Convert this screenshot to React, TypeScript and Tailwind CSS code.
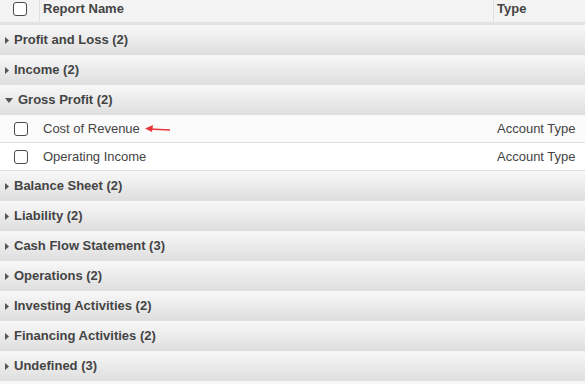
import React from "react";

const groups: { name: string; open?: boolean; children?: { name: string; type: string; arrow?: boolean }[] }[] = [
  { name: "Profit and Loss (2)" },
  { name: "Income (2)" },
  {
    name: "Gross Profit (2)",
    open: true,
    children: [
      { name: "Cost of Revenue", type: "Account Type", arrow: true },
      { name: "Operating Income", type: "Account Type" },
    ],
  },
  { name: "Balance Sheet (2)" },
  { name: "Liability (2)" },
  { name: "Cash Flow Statement (3)" },
  { name: "Operations (2)" },
  { name: "Investing Activities (2)" },
  { name: "Financing Activities (2)" },
  { name: "Undefined (3)" },
  { name: "" },
];

function Box() {
  return <div className="w-[14px] h-[14px] rounded-[3px] border border-[#4a4a4a] bg-white" />;
}

function Caret({ open }: { open?: boolean }) {
  return open ? (
    <svg width="8" height="5" viewBox="0 0 8 5" className="ml-[5px] mr-[5px]">
      <polygon points="0,0 8,0 4,5" fill="#555" />
    </svg>
  ) : (
    <svg width="4" height="7" viewBox="0 0 4 7" className="ml-[5px] mr-[5px]">
      <polygon points="0,0 4,3.5 0,7" fill="#555" />
    </svg>
  );
}

export default function App() {
  return (
    <div className="w-[585px] h-[384px] overflow-hidden bg-white text-[13px]" style={{ fontFamily: '"Liberation Sans", Arial, sans-serif' }}>
      <div className="flex h-[22px] bg-[#f3f3f3] border-b-[3px] border-[#e1e3e6] text-[#444] font-bold box-content">
        <div className="w-[40px] flex items-center justify-center border-r border-[#e0e0e0] pb-[5px] pl-[1px]">
          <Box />
        </div>
        <div className="flex-1 flex items-center pl-[3px] border-r border-[#e0e0e0] pb-[4px]">Report Name</div>
        <div className="w-[91px] flex items-center pl-[3px] pb-[4px]">Type</div>
      </div>
      {groups.map((g, i) => (
        <div key={i}>
          <div className="h-[30px] flex items-center font-bold text-[#444] bg-gradient-to-b from-[#f8f8f8] to-[#dedede]">
            <Caret open={g.open} />
            <span>{g.name}</span>
          </div>
          {g.children?.map((c, j) => (
            <div key={j} className={`h-[28px] flex items-center text-[#444] border-b border-[#dcdde3] ${j === 0 ? "bg-[#fbfbfb]" : "bg-white"}`}>
              <div className="w-[40px] flex items-center justify-center pl-[1px]">
                <Box />
              </div>
              <div className="flex-1 flex items-center pl-[3px]">
                <span>{c.name}</span>
                {c.arrow && (
                  <svg width="26" height="8" viewBox="0 0 26 8" className="ml-[5px]">
                    <line x1="4" y1="4" x2="25" y2="5" stroke="#e8383d" strokeWidth="1.6" />
                    <polygon points="0,3.5 8,0 7,7" fill="#e8383d" />
                  </svg>
                )}
              </div>
              <div className="w-[91px] pl-[3px]">{c.type}</div>
            </div>
          ))}
        </div>
      ))}
    </div>
  );
}
